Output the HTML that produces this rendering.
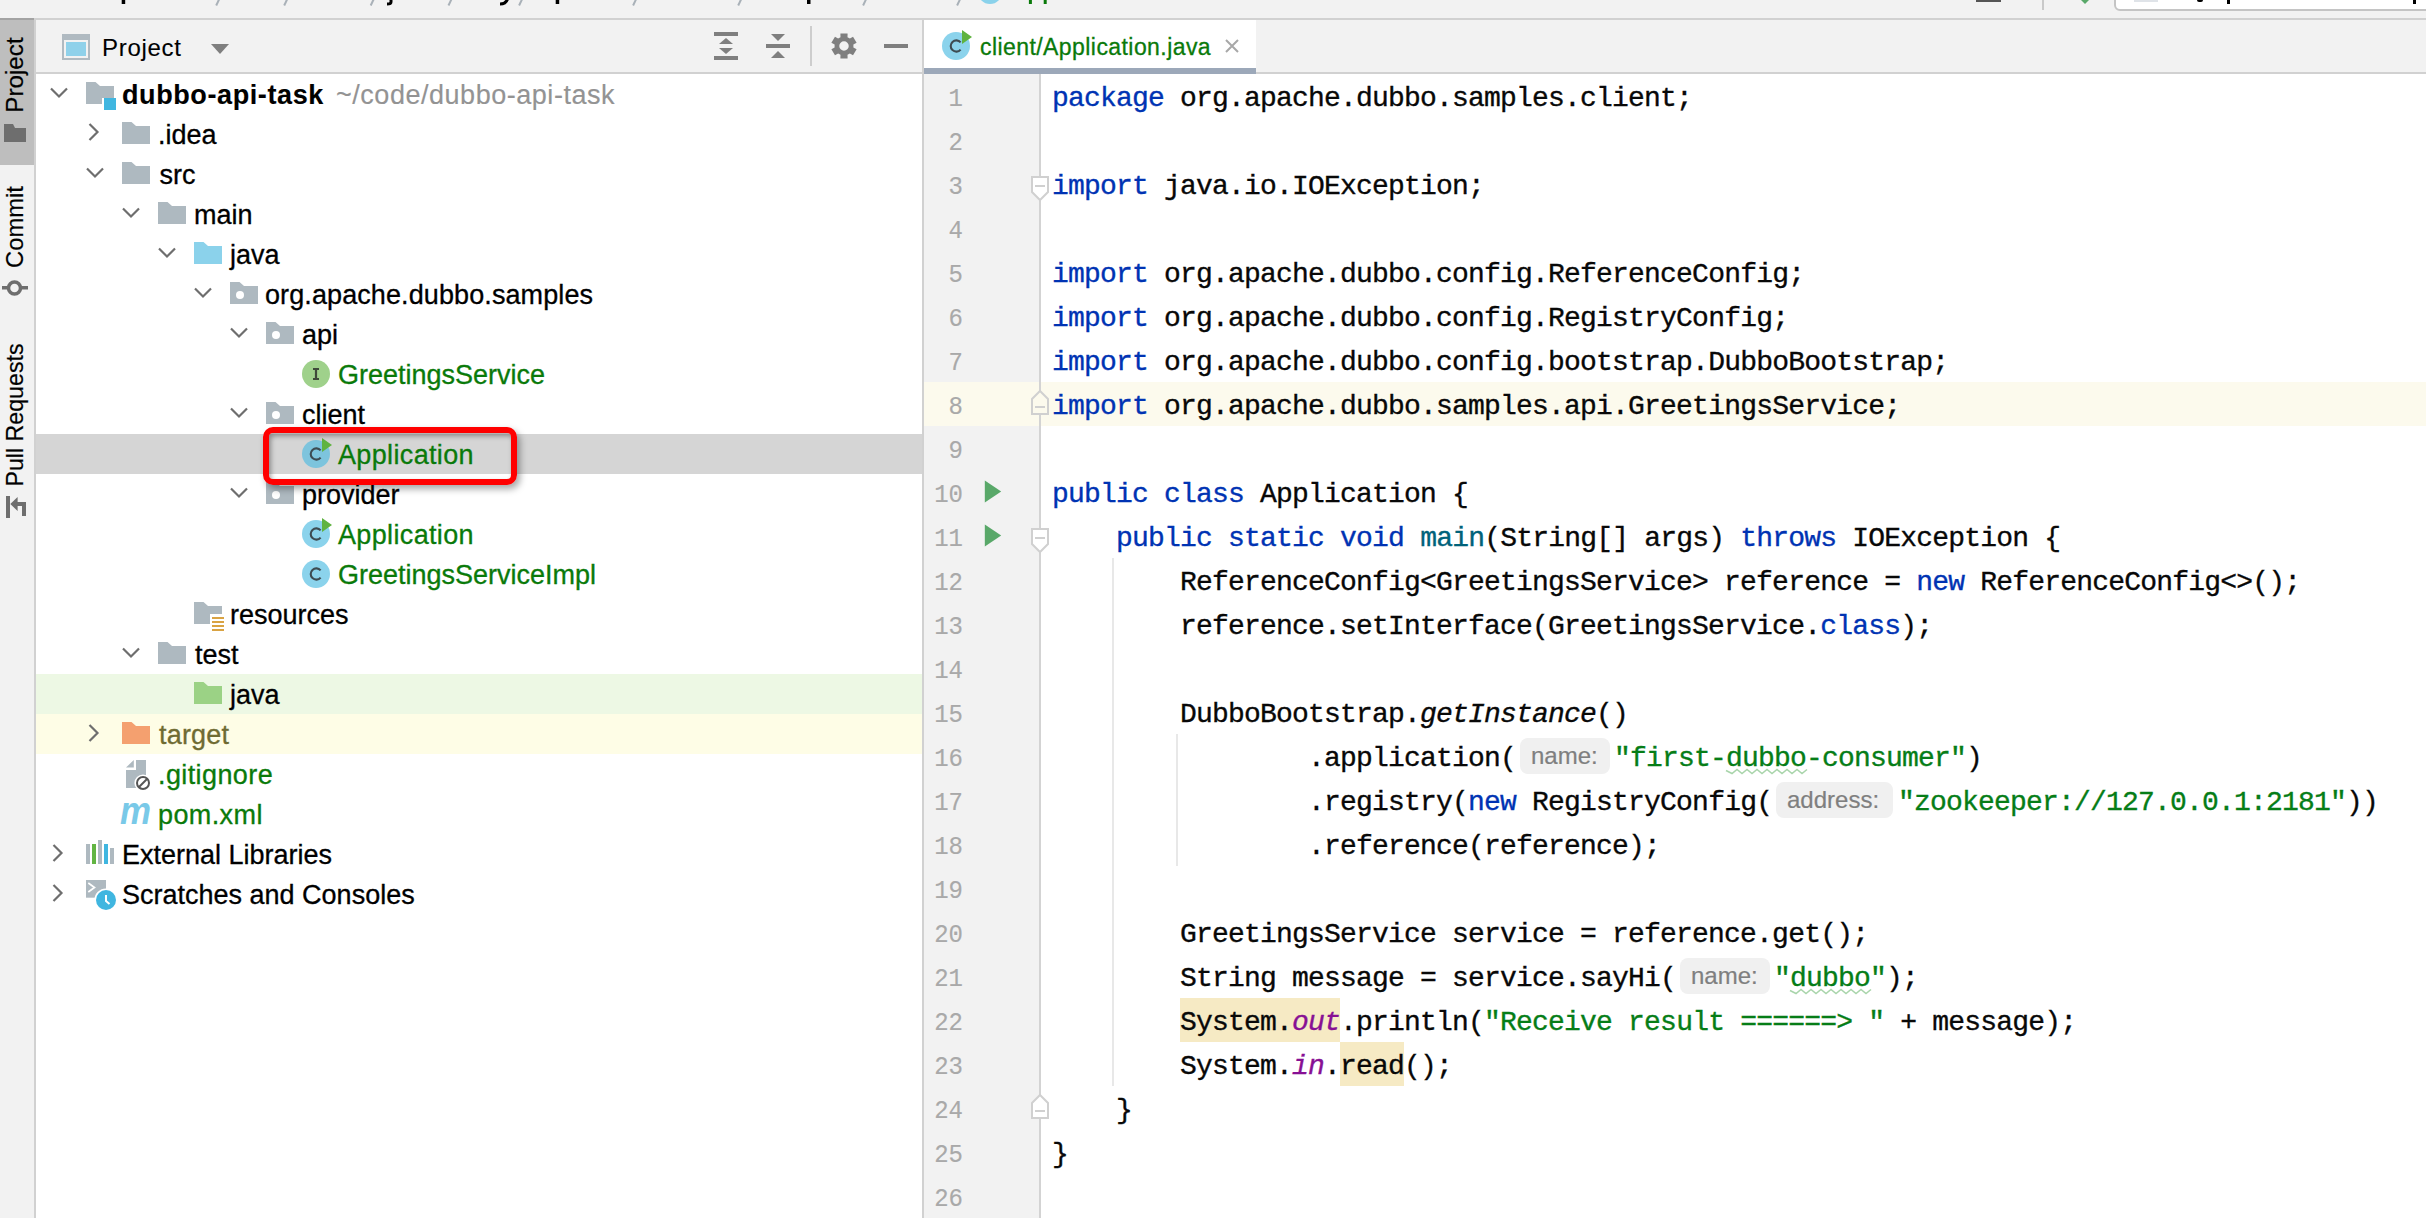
<!DOCTYPE html><html><head><meta charset='utf-8'><style>
*{box-sizing:border-box}
html,body{margin:0;padding:0}
body{width:2426px;height:1218px;overflow:hidden;position:relative;background:#f2f2f2;font-family:"Liberation Sans", sans-serif}
.a{position:absolute}
.t{position:absolute;white-space:pre;font-family:"Liberation Sans", sans-serif;font-size:27px;line-height:40px;color:#000;-webkit-text-stroke:0.3px currentColor}
.c{position:absolute;white-space:pre;font-family:"Liberation Mono", monospace;font-size:28px;letter-spacing:-0.8px;line-height:44px;color:#080808;-webkit-text-stroke:0.35px currentColor}
.ln{position:absolute;white-space:pre;font-family:"Liberation Mono", monospace;font-size:26.6667px;line-height:44px;color:#a9a9a9;text-align:right;width:80px;-webkit-text-stroke:0.15px currentColor;transform:scaleX(0.9);transform-origin:80px 0}
.kw{color:#0033b3}
.str{color:#067d17}
.fn{color:#00627a}
.st{color:#871094;font-style:italic}
.it{font-style:italic}
.hint{position:absolute;background:#f0f0f0;border-radius:8px;height:36px;font-family:"Liberation Sans", sans-serif;font-size:24px;line-height:36px;color:#7f7f7f;white-space:pre;-webkit-text-stroke:0.2px currentColor}
svg{position:absolute;overflow:visible}
</style></head><body>
<div class='a' style='left:0;top:0;width:2426px;height:18px;background:#f2f2f2'></div>
<div class='a' style='left:0;top:18px;width:2426px;height:2px;background:#d1d1d1'></div>
<svg style='left:0;top:0' width='2426' height='18'><line x1='216.2' y1='5.5' x2='220.7' y2='-4' stroke='#a9b1b8' stroke-width='2'/><line x1='284.2' y1='5.5' x2='288.7' y2='-4' stroke='#a9b1b8' stroke-width='2'/><line x1='370.7' y1='5.5' x2='375.2' y2='-4' stroke='#a9b1b8' stroke-width='2'/><line x1='448.5' y1='5.5' x2='453' y2='-4' stroke='#a9b1b8' stroke-width='2'/><line x1='519.1' y1='5.5' x2='523.6' y2='-4' stroke='#a9b1b8' stroke-width='2'/><line x1='633.1' y1='5.5' x2='637.6' y2='-4' stroke='#a9b1b8' stroke-width='2'/><line x1='738.2' y1='5.5' x2='742.7' y2='-4' stroke='#a9b1b8' stroke-width='2'/><line x1='863.1' y1='5.5' x2='867.6' y2='-4' stroke='#a9b1b8' stroke-width='2'/><line x1='957.1' y1='5.5' x2='961.6' y2='-4' stroke='#a9b1b8' stroke-width='2'/><rect x='121.7' y='-2' width='3.5' height='6' fill='#000'/><rect x='555.7' y='-2' width='3.5' height='6' fill='#000'/><rect x='807' y='-2' width='3.5' height='6' fill='#000'/><path d='M391 -2 V2 Q391 4 387 4' stroke='#000' stroke-width='3' fill='none'/><path d='M508 -3 Q507 4 500 4' stroke='#000' stroke-width='3' fill='none'/><circle cx='990' cy='-8' r='12' fill='#8ad2eb'/><rect x='1028.9' y='-2' width='3' height='6' fill='#0a7a0a'/><rect x='1043.7' y='-2' width='3' height='6' fill='#0a7a0a'/></svg>
<div class='a' style='left:1976px;top:0;width:25px;height:2px;background:#555'></div>
<div class='a' style='left:2042px;top:0;width:2px;height:10px;background:#c9c9c9'></div>
<svg style='left:0;top:0' width='2426' height='18'><path d='M2079 -2 L2085 4 L2091 -2 Z' fill='#59a869'/></svg>
<div class='a' style='left:2114px;top:-20px;width:330px;height:31px;background:#fff;border:2px solid #c4c4c4;border-radius:6px'></div>
<div class='a' style='left:2134px;top:0;width:24px;height:2px;background:#dfe3e8'></div>
<div class='a' style='left:2197px;top:0;width:6px;height:2px;background:#000;border-radius:0 0 3px 3px'></div>
<div class='a' style='left:2227px;top:0;width:3px;height:4px;background:#000'></div>
<div class='a' style='left:2413px;top:0;width:3px;height:4px;background:#000'></div>
<div class='a' style='left:0;top:20px;width:34px;height:1198px;background:#f2f2f2'></div>
<div class='a' style='left:34px;top:20px;width:2px;height:1198px;background:#d1d1d1'></div>
<div class='a' style='left:0;top:18px;width:34px;height:2px;background:#a3a3a3'></div>
<div class='a' style='left:0;top:20px;width:34px;height:145px;background:#bebebe'></div>
<div class='a' style='left:15px;top:74.5px;width:0;height:0'><div style='position:absolute;left:0;top:0;transform:translate(-50%,-50%) rotate(-90deg);white-space:pre;font-family:"Liberation Sans", sans-serif;font-size:24.2px;line-height:26px;color:#000;-webkit-text-stroke:0.2px #000'>Project</div></div>
<div class='a' style='left:15px;top:227px;width:0;height:0'><div style='position:absolute;left:0;top:0;transform:translate(-50%,-50%) rotate(-90deg);white-space:pre;font-family:"Liberation Sans", sans-serif;font-size:23.8px;line-height:26px;color:#000;-webkit-text-stroke:0.2px #000'>Commit</div></div>
<div class='a' style='left:15px;top:414.5px;width:0;height:0'><div style='position:absolute;left:0;top:0;transform:translate(-50%,-50%) rotate(-90deg);white-space:pre;font-family:"Liberation Sans", sans-serif;font-size:23.2px;line-height:26px;color:#000;-webkit-text-stroke:0.2px #000'>Pull Requests</div></div>
<svg style='left:0;top:0' width='36' height='1218'><path d='M4 124 H13 L15 128 H26 V142 H4 Z' fill='#6e6e6e'/><rect x='2' y='286' width='26' height='3.5' fill='#6e6e6e'/><circle cx='14.5' cy='288' r='6' fill='#f2f2f2' stroke='#6e6e6e' stroke-width='3.5'/><rect x='6' y='496' width='4' height='22' fill='#6e6e6e'/><path d='M10.3 504 L17.6 497 V511 Z' fill='#6e6e6e'/><path d='M17 502 H26 V516 H22 V506 H17 Z' fill='#6e6e6e'/></svg>
<div class='a' style='left:36px;top:20px;width:886px;height:52px;background:#f2f2f2'></div>
<div class='a' style='left:36px;top:72px;width:886px;height:2px;background:#d1d1d1'></div>
<div class='a' style='left:922px;top:20px;width:2px;height:1198px;background:#d1d1d1'></div>
<svg style='left:0;top:0' width='930' height='75'><rect x='62' y='34' width='28' height='26' fill='#b0bac1'/><rect x='64' y='40' width='24' height='18' fill='#f2f2f2'/><rect x='66' y='42' width='20' height='14' fill='#8fd1ea'/><path d='M211 44 H229 L220 54 Z' fill='#7f7f7f'/><rect x='714' y='32' width='24' height='4' fill='#7f7f7f'/><path d='M726 38 L733 44 H719 Z' fill='#7f7f7f'/><path d='M719 48 H733 L726 54 Z' fill='#7f7f7f'/><rect x='714' y='56' width='24' height='4' fill='#7f7f7f'/><path d='M771 34 H785 L778 41 Z' fill='#7f7f7f'/><rect x='766' y='44' width='24' height='4' fill='#7f7f7f'/><path d='M778 51 L785 58 H771 Z' fill='#7f7f7f'/><rect x='810' y='26' width='2' height='40' fill='#cdcdcd'/><rect x='884' y='44' width='24' height='4' fill='#7f7f7f'/></svg>
<svg style='left:0;top:0' width='930' height='75'><path fill-rule='evenodd' d='M840.49 37.17 L840.41 33.51 L847.59 33.51 L847.51 37.17 L849.89 38.55 L853.02 36.64 L856.62 42.86 L853.40 44.62 L853.40 47.38 L856.62 49.14 L853.02 55.36 L849.89 53.45 L847.51 54.83 L847.59 58.49 L840.41 58.49 L840.49 54.83 L838.11 53.45 L834.98 55.36 L831.38 49.14 L834.60 47.38 L834.60 44.62 L831.38 42.86 L834.98 36.64 L838.11 38.55 Z M848.75 46 A4.75 4.75 0 1 0 839.25 46 A4.75 4.75 0 1 0 848.75 46 Z' fill='#7f7f7f'/></svg>
<div class='t' style='left:102px;top:27.5px;font-size:24px;letter-spacing:0.7px;-webkit-text-stroke:0.1px #000'>Project</div>
<div class='a' style='left:36px;top:74px;width:886px;height:1144px;background:#fff'></div>
<div class='a' style='left:36px;top:434px;width:886px;height:40px;background:#d5d5d5'></div>
<div class='a' style='left:36px;top:674px;width:886px;height:40px;background:#edf8e4'></div>
<div class='a' style='left:36px;top:714px;width:886px;height:40px;background:#fefde6'></div>
<div class='t' style='left:122px;top:75px;color:#000;font-weight:bold;letter-spacing:0.6px;-webkit-text-stroke:0.1px #000'>dubbo-api-task</div>
<div class='t' style='left:336px;top:75px;color:#939393;font-weight:normal;font-size:27px;letter-spacing:0.53px;-webkit-text-stroke:0.15px #939393'>~/code/dubbo-api-task</div>
<div class='t' style='left:158px;top:115px;color:#000;font-weight:normal;'>.idea</div>
<div class='t' style='left:159.5px;top:155px;color:#000;font-weight:normal;'>src</div>
<div class='t' style='left:194px;top:195px;color:#000;font-weight:normal;'>main</div>
<div class='t' style='left:230px;top:235px;color:#000;font-weight:normal;'>java</div>
<div class='t' style='left:265px;top:275px;color:#000;font-weight:normal;letter-spacing:0.1px'>org.apache.dubbo.samples</div>
<div class='t' style='left:302px;top:315px;color:#000;font-weight:normal;'>api</div>
<div class='t' style='left:338px;top:355px;color:#0a7a0a;font-weight:normal;'>GreetingsService</div>
<div class='t' style='left:302px;top:395px;color:#000;font-weight:normal;'>client</div>
<div class='t' style='left:338px;top:435px;color:#0a7a0a;font-weight:normal;letter-spacing:0.35px'>Application</div>
<div class='t' style='left:302px;top:475px;color:#000;font-weight:normal;'>provider</div>
<div class='t' style='left:338px;top:515px;color:#0a7a0a;font-weight:normal;letter-spacing:0.35px'>Application</div>
<div class='t' style='left:338px;top:555px;color:#0a7a0a;font-weight:normal;'>GreetingsServiceImpl</div>
<div class='t' style='left:230px;top:595px;color:#000;font-weight:normal;'>resources</div>
<div class='t' style='left:195px;top:635px;color:#000;font-weight:normal;'>test</div>
<div class='t' style='left:230px;top:675px;color:#000;font-weight:normal;'>java</div>
<div class='t' style='left:159px;top:715px;color:#6f6b32;font-weight:normal;letter-spacing:0.2px'>target</div>
<div class='t' style='left:158px;top:755px;color:#0a7a0a;font-weight:normal;letter-spacing:0.4px'>.gitignore</div>
<div class='t' style='left:158px;top:795px;color:#0a7a0a;font-weight:normal;letter-spacing:0.4px'>pom.xml</div>
<div class='t' style='left:122px;top:835px;color:#000;font-weight:normal;'>External Libraries</div>
<div class='t' style='left:122px;top:875px;color:#000;font-weight:normal;'>Scratches and Consoles</div>
<svg style='left:0;top:0' width='930' height='1218'><path d='M51 88.5 L59 96.5 L67 88.5' stroke='#6e6e6e' stroke-width='2.2' fill='none'/><path d='M86 82 H95.5 L100 86 H114 V98 H102 V104 H86 Z' fill='#aeb9c0'/><rect x='104' y='98' width='12' height='12' fill='#40b6e0'/><path d='M89.5 124 L97.5 132 L89.5 140' stroke='#6e6e6e' stroke-width='2.2' fill='none'/><path d='M122 122 H131.5 L136 126 H150 V144 H122 Z' fill='#aeb9c0'/><path d='M87 168.5 L95 176.5 L103 168.5' stroke='#6e6e6e' stroke-width='2.2' fill='none'/><path d='M122 162 H131.5 L136 166 H150 V184 H122 Z' fill='#aeb9c0'/><path d='M123 208.5 L131 216.5 L139 208.5' stroke='#6e6e6e' stroke-width='2.2' fill='none'/><path d='M158 202 H167.5 L172 206 H186 V224 H158 Z' fill='#aeb9c0'/><path d='M159 248.5 L167 256.5 L175 248.5' stroke='#6e6e6e' stroke-width='2.2' fill='none'/><path d='M194 242 H203.5 L208 246 H222 V264 H194 Z' fill='#8bd2eb'/><path d='M195 288.5 L203 296.5 L211 288.5' stroke='#6e6e6e' stroke-width='2.2' fill='none'/><path d='M230 282 H239.5 L244 286 H258 V304 H230 Z' fill='#aeb9c0'/><circle cx='240' cy='295' r='4' fill='#fff'/><path d='M231 328.5 L239 336.5 L247 328.5' stroke='#6e6e6e' stroke-width='2.2' fill='none'/><path d='M266 322 H275.5 L280 326 H294 V344 H266 Z' fill='#aeb9c0'/><circle cx='276' cy='335' r='4' fill='#fff'/><circle cx='316' cy='374' r='14' fill='#9fd18b'/><path d='M313 369 H319 M316 369 V379 M313 379 H319' stroke='#3f4a3a' stroke-width='2.2' fill='none'/><path d='M231 408.5 L239 416.5 L247 408.5' stroke='#6e6e6e' stroke-width='2.2' fill='none'/><path d='M266 402 H275.5 L280 406 H294 V424 H266 Z' fill='#aeb9c0'/><circle cx='276' cy='415' r='4' fill='#fff'/><circle cx='316' cy='454' r='14' fill='#7dc4dd'/><path d='M320.6 450.4 A5.6 5.6 0 1 0 320.6 457.6' stroke='#3d4b52' stroke-width='2.1' fill='none'/><path d='M322 438 L332 445 L322 452 Z' fill='#5fb340'/><path d='M231 488.5 L239 496.5 L247 488.5' stroke='#6e6e6e' stroke-width='2.2' fill='none'/><path d='M266 482 H275.5 L280 486 H294 V504 H266 Z' fill='#aeb9c0'/><circle cx='276' cy='495' r='4' fill='#fff'/><circle cx='316' cy='534' r='14' fill='#8bd3ec'/><path d='M320.6 530.4 A5.6 5.6 0 1 0 320.6 537.6' stroke='#3d4b52' stroke-width='2.1' fill='none'/><path d='M322 518 L332 525 L322 532 Z' fill='#5fb340'/><circle cx='316' cy='574' r='14' fill='#8bd3ec'/><path d='M320.6 570.4 A5.6 5.6 0 1 0 320.6 577.6' stroke='#3d4b52' stroke-width='2.1' fill='none'/><path d='M194 602 H203.5 L208 606 H222 V614 H210 V624 H194 Z' fill='#aeb9c0'/><rect x='212' y='617' width='12' height='2' fill='#d9a343'/><rect x='212' y='621' width='12' height='2' fill='#d9a343'/><rect x='212' y='625' width='12' height='2' fill='#d9a343'/><rect x='212' y='629' width='12' height='2' fill='#d9a343'/><path d='M123 648.5 L131 656.5 L139 648.5' stroke='#6e6e6e' stroke-width='2.2' fill='none'/><path d='M158 642 H167.5 L172 646 H186 V664 H158 Z' fill='#aeb9c0'/><path d='M194 682 H203.5 L208 686 H222 V704 H194 Z' fill='#9bd285'/><path d='M89.5 725 L97.5 733 L89.5 741' stroke='#6e6e6e' stroke-width='2.2' fill='none'/><path d='M122 722 H131.5 L136 726 H150 V744 H122 Z' fill='#f4a06f'/><path d='M136 760 H146 V788 H126 V770 H136 Z' fill='#aeb9c0'/><path d='M126 767.5 L133.8 760 V767.5 Z' fill='#aeb9c0'/><circle cx='143' cy='783' r='8.6' fill='#fff'/><circle cx='143' cy='783' r='6' fill='none' stroke='#555' stroke-width='2'/><path d='M139 787 L147 779' stroke='#555' stroke-width='2'/><text x='120' y='824' font-family='Liberation Sans' font-weight='bold' font-style='italic' font-size='38' fill='#79c9e8' textLength='31' lengthAdjust='spacingAndGlyphs'>m</text><path d='M53.5 845 L61.5 853 L53.5 861' stroke='#6e6e6e' stroke-width='2.2' fill='none'/><rect x='86' y='844' width='4' height='20' fill='#aeb9c0'/><rect x='92' y='844' width='4' height='20' fill='#62b543'/><rect x='98' y='840' width='4' height='24' fill='#aeb9c0'/><rect x='104' y='844' width='4' height='20' fill='#40b6e0'/><rect x='110' y='848' width='4' height='16' fill='#aeb9c0'/><path d='M53.5 885 L61.5 893 L53.5 901' stroke='#6e6e6e' stroke-width='2.2' fill='none'/><rect x='86' y='880' width='20' height='17.7' fill='#aeb9c0'/><path d='M88.3 883 L94.5 887.5 L88.3 892' stroke='#fff' stroke-width='1.7' fill='none'/><circle cx='106' cy='900' r='11.6' fill='#fff'/><circle cx='106' cy='900' r='10' fill='#40b6e0'/><path d='M106 895 V901 L109.5 904' stroke='#fff' stroke-width='2' fill='none'/></svg>
<div class='a' style='left:263px;top:427px;width:254px;height:58px;border:6.5px solid #ff0000;border-radius:10px;box-shadow:3px 4px 7px rgba(0,0,0,0.35), inset 2px 3px 5px rgba(0,0,0,0.35)'></div>
<div class='a' style='left:924px;top:20px;width:1502px;height:52px;background:#f2f2f2'></div>
<div class='a' style='left:924px;top:72px;width:1502px;height:2px;background:#d1d1d1'></div>
<div class='a' style='left:924px;top:20px;width:332px;height:48px;background:#fff'></div>
<div class='a' style='left:924px;top:68px;width:332px;height:6px;background:#9ca8b9'></div>
<svg style='left:0;top:0' width='1300' height='75'><circle cx='956' cy='46' r='14' fill='#8bd3ec'/><path d='M960.6 42.4 A5.6 5.6 0 1 0 960.6 49.6' stroke='#3d4b52' stroke-width='2.1' fill='none'/><path d='M962 30 L972 37 L962 44 Z' fill='#5fb340'/><path d='M1226 40 L1238 52 M1238 40 L1226 52' stroke='#a8a8a8' stroke-width='2'/></svg>
<div class='t' style='left:980px;top:26.5px;color:#0a7a0a;font-size:23px;letter-spacing:0.43px'>client/Application.java</div>
<div class='a' style='left:924px;top:74px;width:1502px;height:1144px;background:#fff'></div>
<div class='a' style='left:924px;top:74px;width:115px;height:1144px;background:#f2f2f2'></div>
<div class='a' style='left:924px;top:382px;width:1502px;height:44px;background:#fcfaed'></div>
<div class='a' style='left:1180px;top:998px;width:160px;height:44px;background:#f6eac4'></div>
<div class='a' style='left:1340px;top:1042px;width:64px;height:44px;background:#f6eac4'></div>
<div class='a' style='left:1039px;top:74px;width:2px;height:1144px;background:#d3d3d3'></div>
<div class='a' style='left:1112px;top:558px;width:2px;height:528px;background:#e8e8e8'></div>
<div class='a' style='left:1176px;top:734px;width:2px;height:132px;background:#e8e8e8'></div>
<div class='ln' style='left:883px;top:77px'>1</div>
<div class='ln' style='left:883px;top:121px'>2</div>
<div class='ln' style='left:883px;top:165px'>3</div>
<div class='ln' style='left:883px;top:209px'>4</div>
<div class='ln' style='left:883px;top:253px'>5</div>
<div class='ln' style='left:883px;top:297px'>6</div>
<div class='ln' style='left:883px;top:341px'>7</div>
<div class='ln' style='left:883px;top:385px'>8</div>
<div class='ln' style='left:883px;top:429px'>9</div>
<div class='ln' style='left:883px;top:473px'>10</div>
<div class='ln' style='left:883px;top:517px'>11</div>
<div class='ln' style='left:883px;top:561px'>12</div>
<div class='ln' style='left:883px;top:605px'>13</div>
<div class='ln' style='left:883px;top:649px'>14</div>
<div class='ln' style='left:883px;top:693px'>15</div>
<div class='ln' style='left:883px;top:737px'>16</div>
<div class='ln' style='left:883px;top:781px'>17</div>
<div class='ln' style='left:883px;top:825px'>18</div>
<div class='ln' style='left:883px;top:869px'>19</div>
<div class='ln' style='left:883px;top:913px'>20</div>
<div class='ln' style='left:883px;top:957px'>21</div>
<div class='ln' style='left:883px;top:1001px'>22</div>
<div class='ln' style='left:883px;top:1045px'>23</div>
<div class='ln' style='left:883px;top:1089px'>24</div>
<div class='ln' style='left:883px;top:1133px'>25</div>
<div class='ln' style='left:883px;top:1177px'>26</div>
<div class='c' style='left:1052px;top:77px'><span class='kw'>package</span> org.apache.dubbo.samples.client;</div>
<div class='c' style='left:1052px;top:165px'><span class='kw'>import</span> java.io.IOException;</div>
<div class='c' style='left:1052px;top:253px'><span class='kw'>import</span> org.apache.dubbo.config.ReferenceConfig;</div>
<div class='c' style='left:1052px;top:297px'><span class='kw'>import</span> org.apache.dubbo.config.RegistryConfig;</div>
<div class='c' style='left:1052px;top:341px'><span class='kw'>import</span> org.apache.dubbo.config.bootstrap.DubboBootstrap;</div>
<div class='c' style='left:1052px;top:385px'><span class='kw'>import</span> org.apache.dubbo.samples.api.GreetingsService;</div>
<div class='c' style='left:1052px;top:473px'><span class='kw'>public</span> <span class='kw'>class</span> Application {</div>
<div class='c' style='left:1052px;top:517px'>    <span class='kw'>public</span> <span class='kw'>static</span> <span class='kw'>void</span> <span class='fn'>main</span>(String[] args) <span class='kw'>throws</span> IOException {</div>
<div class='c' style='left:1052px;top:561px'>        ReferenceConfig&lt;GreetingsService&gt; reference = <span class='kw'>new</span> ReferenceConfig&lt;&gt;();</div>
<div class='c' style='left:1052px;top:605px'>        reference.setInterface(GreetingsService.<span class='kw'>class</span>);</div>
<div class='c' style='left:1052px;top:693px'>        DubboBootstrap.<span class='it'>getInstance</span>()</div>
<div class='c' style='left:1052px;top:737px'>                .application(</div>
<div class='c' style='left:1052px;top:781px'>                .registry(<span class='kw'>new</span> RegistryConfig(</div>
<div class='c' style='left:1052px;top:825px'>                .reference(reference);</div>
<div class='c' style='left:1052px;top:913px'>        GreetingsService service = reference.get();</div>
<div class='c' style='left:1052px;top:957px'>        String message = service.sayHi(</div>
<div class='c' style='left:1052px;top:1001px'>        System.<span class='st'>out</span>.println(<span class='str'>&quot;Receive result ======&gt; &quot;</span> + message);</div>
<div class='c' style='left:1052px;top:1045px'>        System.<span class='st'>in</span>.read();</div>
<div class='c' style='left:1052px;top:1089px'>    }</div>
<div class='c' style='left:1052px;top:1133px'>}</div>
<div class='c' style='left:1614px;top:737px'><span class='str'>&quot;first-dubbo-consumer&quot;</span>)</div>
<div class='c' style='left:1898px;top:781px'><span class='str'>&quot;zookeeper://127.0.0.1:2181&quot;</span>))</div>
<div class='c' style='left:1774px;top:957px'><span class='str'>&quot;dubbo&quot;</span>);</div>
<div class='hint' style='left:1520px;top:738px;width:90px;padding-left:11px'>name:</div>
<div class='hint' style='left:1776px;top:782px;width:117px;padding-left:11px'>address:</div>
<div class='hint' style='left:1680px;top:958px;width:90px;padding-left:11px'>name:</div>
<svg style='left:0;top:0' width='2426' height='1218'><path d='M1726 770.5 L1732 773.5 L1737 769.5 L1742 773.5 L1747 769.5 L1752 773.5 L1757 769.5 L1762 773.5 L1767 769.5 L1772 773.5 L1777 769.5 L1782 773.5 L1787 769.5 L1792 773.5 L1797 769.5 L1802 773.5 L1807 769.5' stroke='#a9d5ab' stroke-width='1.6' fill='none'/><path d='M1790 990.5 L1796 993.5 L1801 989.5 L1806 993.5 L1811 989.5 L1816 993.5 L1821 989.5 L1826 993.5 L1831 989.5 L1836 993.5 L1841 989.5 L1846 993.5 L1851 989.5 L1856 993.5 L1861 989.5 L1866 993.5 L1871 989.5' stroke='#a9d5ab' stroke-width='1.6' fill='none'/><path d='M984.8 480.5 L1001.2 491.5 L984.8 502.5 Z' fill='#59a869'/><path d='M984.8 524.5 L1001.2 535.5 L984.8 546.5 Z' fill='#59a869'/></svg>
<svg style='left:0;top:0' width='2426' height='1218'><path d='M1032 177 H1048 V192 L1040 200 L1032 192 Z' fill='#fff' stroke='#d0d0d0' stroke-width='2'/><rect x='1035' y='185' width='10' height='2' fill='#d0d0d0'/><path d='M1032 414 H1048 V399 L1040 391 L1032 399 Z' fill='#fcfaed' stroke='#d0d0d0' stroke-width='2'/><rect x='1035' y='406' width='10' height='2' fill='#d0d0d0'/><path d='M1032 529 H1048 V544 L1040 552 L1032 544 Z' fill='#fff' stroke='#d0d0d0' stroke-width='2'/><rect x='1035' y='537' width='10' height='2' fill='#d0d0d0'/><path d='M1032 1118 H1048 V1103 L1040 1095 L1032 1103 Z' fill='#fff' stroke='#d0d0d0' stroke-width='2'/><rect x='1035' y='1110' width='10' height='2' fill='#d0d0d0'/></svg>
</body></html>
